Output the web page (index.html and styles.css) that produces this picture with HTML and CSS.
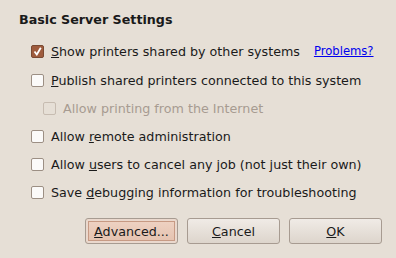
FILE: index.html
```html
<!DOCTYPE html>
<html lang="en">
<head>
    <meta charset="UTF-8">
    <title>Basic Server Settings</title>
    <link rel="stylesheet" href="styles.css">
</head>
<body>
    <div class="dialog">
        <h2 class="title">Basic Server Settings</h2>
        <div class="options">
            <div class="row first">
                <span class="check checked"><svg width="9" height="9" viewBox="0 0 9 9"><path d="M1.5 4.5 L3.8 7.5 L7.8 0.8" fill="none" stroke="#fff" stroke-width="1.8"/></svg></span>
                <span class="label"><u>S</u>how printers shared by other systems</span>
                <a class="link" href="#">Problems?</a>
            </div>
            <div class="row">
                <span class="check"></span>
                <span class="label"><u>P</u>ublish shared printers connected to this system</span>
            </div>
            <div class="row sub disabled">
                <span class="check"></span>
                <span class="label">Allow printing from the Internet</span>
            </div>
            <div class="row">
                <span class="check"></span>
                <span class="label">Allow <u>r</u>emote administration</span>
            </div>
            <div class="row">
                <span class="check"></span>
                <span class="label">Allow <u>u</u>sers to cancel any job (not just their own)</span>
            </div>
            <div class="row">
                <span class="check"></span>
                <span class="label">Save <u>d</u>ebugging information for troubleshooting</span>
            </div>
        </div>
        <div class="buttons">
            <button class="btn focus"><u>A</u>dvanced...</button>
            <button class="btn"><u>C</u>ancel</button>
            <button class="btn"><u>O</u>K</button>
        </div>
    </div>
</body>
</html>
```

FILE: styles.css
```css
body {
    margin: 0;
    background-color: #e6dfd6;
    font-family: "DejaVu Sans", sans-serif;
    font-size: 12.7px;
    color: #1a1a1a;
}

.dialog {
    width: 396px;
    height: 258px;
    box-sizing: border-box;
    padding: 12px 14px 0 19px;
}

.title {
    margin: 0;
    font-size: 12.7px;
    font-weight: bold;
    line-height: 16px;
}

.options {
    padding-top: 8px;
    padding-left: 12px;
}

.row {
    display: flex;
    align-items: center;
    height: 28px;
}

.row.first {
    height: 30px;
}

.row.sub {
    padding-left: 12px;
}

.check {
    width: 11px;
    height: 11px;
    border: 1px solid #9c8f84;
    border-radius: 2px;
    background: #fbfaf9;
    margin-right: 7px;
    display: flex;
    align-items: center;
    justify-content: center;
    flex: none;
}

.check.checked {
    background: #9f5c3e;
    border-color: #7a4a33;
}

.disabled .check {
    border-color: #c7bcb1;
    background: #e6dfd6;
}

.disabled .label {
    color: #a79b91;
}

.label u {
    text-decoration-thickness: 1px;
}

.link {
    margin-left: 14px;
    font-size: 11.6px;
    color: #0000ee;
}

.buttons {
    display: flex;
    justify-content: flex-end;
    gap: 9px;
    margin-top: 12px;
}

.btn {
    width: 93px;
    height: 26px;
    font-family: "DejaVu Sans", sans-serif;
    font-size: 12.7px;
    color: #1a1a1a;
    border: 1px solid #a79b91;
    border-radius: 3px;
    background: linear-gradient(#f0ebe6, #ddd5cc);
    padding: 0;
}

.btn.focus {
    background: linear-gradient(#efd3c4, #e4c1ae);
    box-shadow: inset 0 0 0 2px #ead8cd;
    outline: 1px solid #c79a84;
    outline-offset: -4px;
}
```
